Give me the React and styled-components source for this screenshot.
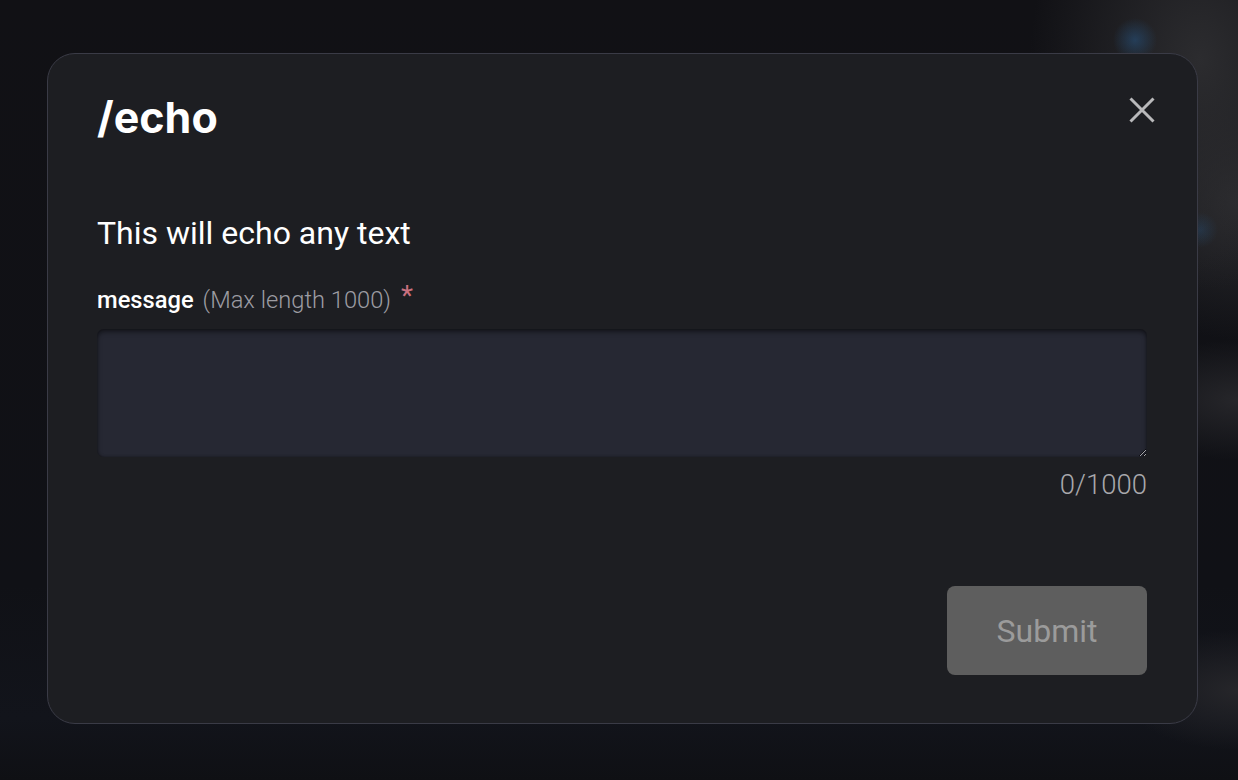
import React, { useState } from "react";
import styled, { createGlobalStyle } from "styled-components";

const GlobalStyle = createGlobalStyle`
  html, body {
    margin: 0;
    padding: 0;
  }
  body {
    width: 1238px;
    height: 780px;
    overflow: hidden;
    font-family: Roboto, "Liberation Sans", sans-serif;
    background-color: #101115;
    background-image:
      radial-gradient(circle at 1135px 40px, rgba(40, 90, 140, 0.5) 0, rgba(40, 90, 140, 0) 22px),
      radial-gradient(circle at 1200px 230px, rgba(40, 90, 140, 0.3) 0, rgba(40, 90, 140, 0) 18px),
      radial-gradient(ellipse 170px 230px at 1200px 60px, #2c2c2f 0, rgba(44, 44, 47, 0) 100%),
      radial-gradient(ellipse 140px 140px at 1238px 200px, #2b2b2e 0, rgba(43, 43, 46, 0) 100%),
      radial-gradient(ellipse 120px 60px at 1238px 400px, #26262a 0, rgba(38, 38, 42, 0) 100%),
      radial-gradient(ellipse 120px 60px at 1238px 690px, #26262a 0, rgba(38, 38, 42, 0) 100%),
      linear-gradient(180deg, #111115 0%, #101116 75%, #12141b 92%, #0f1014 100%);
  }
`;

const Page = styled.div`
  padding: 53px 0 0 47px;
`;

const Modal = styled.div`
  box-sizing: border-box;
  width: 1151px;
  height: 671px;
  background: #1d1e22;
  border: 1px solid #3a3b46;
  border-radius: 28px;
  padding: 42px 50px 48px 49px;
  display: flex;
  flex-direction: column;
`;

const Header = styled.div`
  display: flex;
  justify-content: space-between;
  align-items: flex-start;
`;

const Title = styled.h2`
  margin: 0;
  font-family: Inter, "Liberation Sans", sans-serif;
  font-weight: 700;
  font-size: 43px;
  line-height: 43px;
  letter-spacing: 0;
  color: #ffffff;
`;

const CloseButton = styled.button`
  margin: 1px -8px 0 0;
  padding: 0;
  width: 26px;
  height: 26px;
  border: 0;
  background: none;
  cursor: pointer;
  display: flex;
`;

const Description = styled.p`
  margin: 78px 0 0;
  font-size: 32px;
  line-height: 32px;
  color: #ffffff;
`;

const Label = styled.label`
  margin-top: 39px;
  display: flex;
  align-items: baseline;
  font-size: 23.7px;
  line-height: 24px;
`;

const FieldName = styled.span`
  font-weight: 500;
  color: #ffffff;
`;

const FieldHint = styled.span`
  margin-left: 9px;
  font-weight: 300;
  color: #9c9ca2;
`;

const Required = styled.span`
  margin-left: 10px;
  font-size: 28px;
  line-height: 24px;
  color: #c9707f;
  align-self: flex-start;
  margin-top: -4px;
`;

const TextArea = styled.textarea`
  box-sizing: border-box;
  margin-top: 17px;
  width: 100%;
  height: 128px;
  padding: 14px 16px;
  border: 0;
  border-radius: 7px;
  background: #262833;
  box-shadow: inset 0 3px 5px rgba(0, 0, 0, 0.45), inset 0 0 3px rgba(0, 0, 0, 0.35);
  color: #ffffff;
  font-family: Roboto, "Liberation Sans", sans-serif;
  font-size: 23px;
  resize: vertical;
  outline: none;
  color-scheme: dark;
`;

const Counter = styled.div`
  margin-top: 14px;
  text-align: right;
  font-size: 27.5px;
  line-height: 27px;
  font-weight: 300;
  color: #a8a8ac;
`;

const Footer = styled.div`
  margin-top: auto;
  display: flex;
  justify-content: flex-end;
`;

const SubmitButton = styled.button`
  width: 200px;
  height: 89px;
  border: 0;
  border-radius: 8px;
  background: #5e5e5e;
  color: #9b9b9b;
  font-family: Roboto, "Liberation Sans", sans-serif;
  font-size: 32px;
  font-weight: 400;
  cursor: not-allowed;
`;

const CloseIcon = () => (
  <svg width="26" height="26" viewBox="0 0 26 26">
    <path d="M1.5 1.5 L24.5 24.5 M24.5 1.5 L1.5 24.5" stroke="#b9b9bb" strokeWidth="3" />
  </svg>
);

const App = () => {
  const [message, setMessage] = useState("");

  return (
    <Page>
      <GlobalStyle />
      <Modal>
        <Header>
          <Title>/echo</Title>
          <CloseButton aria-label="Close">
            <CloseIcon />
          </CloseButton>
        </Header>
        <Description>This will echo any text</Description>
        <Label htmlFor="message">
          <FieldName>message</FieldName>
          <FieldHint>(Max length 1000)</FieldHint>
          <Required>*</Required>
        </Label>
        <TextArea
          id="message"
          maxLength={1000}
          value={message}
          onChange={(e) => setMessage(e.target.value)}
        />
        <Counter>{message.length}/1000</Counter>
        <Footer>
          <SubmitButton disabled={!message}>Submit</SubmitButton>
        </Footer>
      </Modal>
    </Page>
  );
};

export default App;
